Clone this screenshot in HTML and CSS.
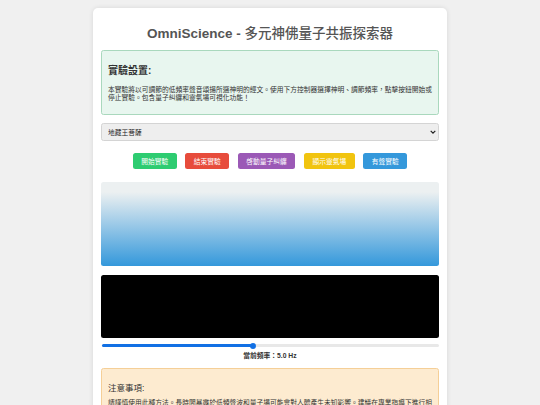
FILE: index.html
```html
<!DOCTYPE html>
<html lang="zh-Hant">
<head>
<meta charset="utf-8">
<title>OmniScience</title>
<link rel="stylesheet" href="styles.css">
</head>
<body>
<main class="container">
  <h1 class="title">OmniScience - <span class="title-cjk">多元神佛量子共振探索器</span></h1>
  <section class="panel panel-info">
    <h2 class="panel-title">實驗設置:</h2>
    <p class="panel-text">本實驗將以可調節的低頻率聲音頌揚所選神明的經文。使用下方控制器選擇神明、調節頻率&#xFF0C;點擊按鈕開始或停止實驗。包含量子糾纏和靈氣場可視化功能&#xFF01;</p>
  </section>
  <select class="deity">
    <option>地藏王菩薩</option>
  </select>
  <div class="actions">
    <button class="btn btn-green">開始實驗</button>
    <button class="btn btn-red">結束實驗</button>
    <button class="btn btn-purple">啓動量子糾纏</button>
    <button class="btn btn-yellow">顯示靈氣場</button>
    <button class="btn btn-blue">有聲實驗</button>
  </div>
  <div class="aura"></div>
  <div class="scope"></div>
  <div class="slider"><div class="slider-fill"></div><div class="slider-thumb"></div></div>
  <p class="freq">當前頻率&#xFF1A;5.0 Hz</p>
  <section class="panel panel-warn">
    <h3 class="warn-title">注意事項:</h3>
    <p class="panel-text">請謹慎使用此種方法。長時間暴露於低頻聲波和量子場可能會對人體產生未知影響。建議在專業指導下進行相關實驗。</p>
  </section>
</main>
</body>
</html>
```
FILE: styles.css
```css
* { box-sizing: border-box; }
html, body { height: 100%; overflow: hidden; }
body {
  margin: 0;
  padding-top: 8px;
  background: #f0f0f0;
  color: #333;
  font-family: "Liberation Sans", "Noto Sans CJK TC", sans-serif;
}
.container {
  width: 354px;
  margin: 0 auto;
  padding: 8px;
  background: #fff;
  border-radius: 5px;
  box-shadow: 0 0 5px rgba(0, 0, 0, 0.1);
}
.title {
  margin: 9px 0 8px;
  color: #555;
  font-size: 13.5px;
  font-weight: 700;
  line-height: 17px;
  text-align: center;
}
.title-cjk { font-weight: 500; color: #555; }
.panel {
  padding: 0 5.5px 0 6px;
  border: 1px solid;
  border-radius: 2.5px;
}
.panel-info {
  height: 65px;
  padding-top: 14px;
  background: #e8f6ef;
  border-color: #a9d8bd;
}
.panel-warn {
  height: 60px;
  margin-top: 8px;
  padding-top: 14px;
  background: #fdebd0;
  border-color: #f5cf97;
}
.panel-title {
  margin: 0 0 9px;
  color: #333;
  font-size: 10px;
  font-weight: 700;
  line-height: 12px;
}
.warn-title {
  margin: 0 0 6px;
  font-size: 8.5px;
  font-weight: 400;
  line-height: 10px;
}
.panel-text {
  margin: 0;
  font-size: 6.75px;
  line-height: 8px;
}
.deity {
  display: block;
  width: 100%;
  height: 18px;
  margin-top: 8px;
  padding: 0 6px;
  appearance: none;
  background: #eee url("data:image/svg+xml,%3Csvg xmlns='http://www.w3.org/2000/svg' width='6' height='4' viewBox='0 0 6 4'%3E%3Cpath d='M.7.8 3 3.1 5.3.8' fill='none' stroke='%23222' stroke-width='1.2'/%3E%3C/svg%3E") no-repeat right 2.5px center;
  border: 1px solid #d4d4d4;
  border-radius: 2.5px;
  color: #222;
  font-family: inherit;
  font-size: 6.75px;
}
.actions {
  display: flex;
  justify-content: center;
  gap: 8.5px;
  margin-top: 12px;
}
.btn {
  height: 16px;
  padding: 0 8.5px;
  border: 0;
  border-radius: 2.5px;
  color: #fff;
  font-family: inherit;
  font-size: 6.75px;
}
.btn-green { background: #2ecc71; }
.btn-red { background: #e74c3c; }
.btn-purple { background: #9b59b6; }
.btn-yellow { background: #f1c40f; }
.btn-blue { background: #3498db; }
.aura {
  height: 84px;
  margin-top: 13px;
  background: linear-gradient(to bottom, #ecf0f1 0%, #ecf0f1 12%, #3498db 100%);
  border-radius: 2.5px;
}
.scope {
  height: 63px;
  margin-top: 9px;
  background: #000;
  border-radius: 2.5px;
}
.slider {
  position: relative;
  height: 3px;
  margin: 6px 0 0 1px;
  background: #e8e8e8;
  border-radius: 1.5px;
}
.slider-fill {
  width: 150px;
  height: 100%;
  background: #1170e4;
  border-radius: 1.5px;
}
.slider-thumb {
  position: absolute;
  top: -1.5px;
  left: 148px;
  width: 6px;
  height: 6px;
  background: #1170e4;
  border-radius: 50%;
}
.freq {
  margin: 5px 0 0;
  font-size: 6.75px;
  font-weight: 700;
  line-height: 8px;
  text-align: center;
}
```
